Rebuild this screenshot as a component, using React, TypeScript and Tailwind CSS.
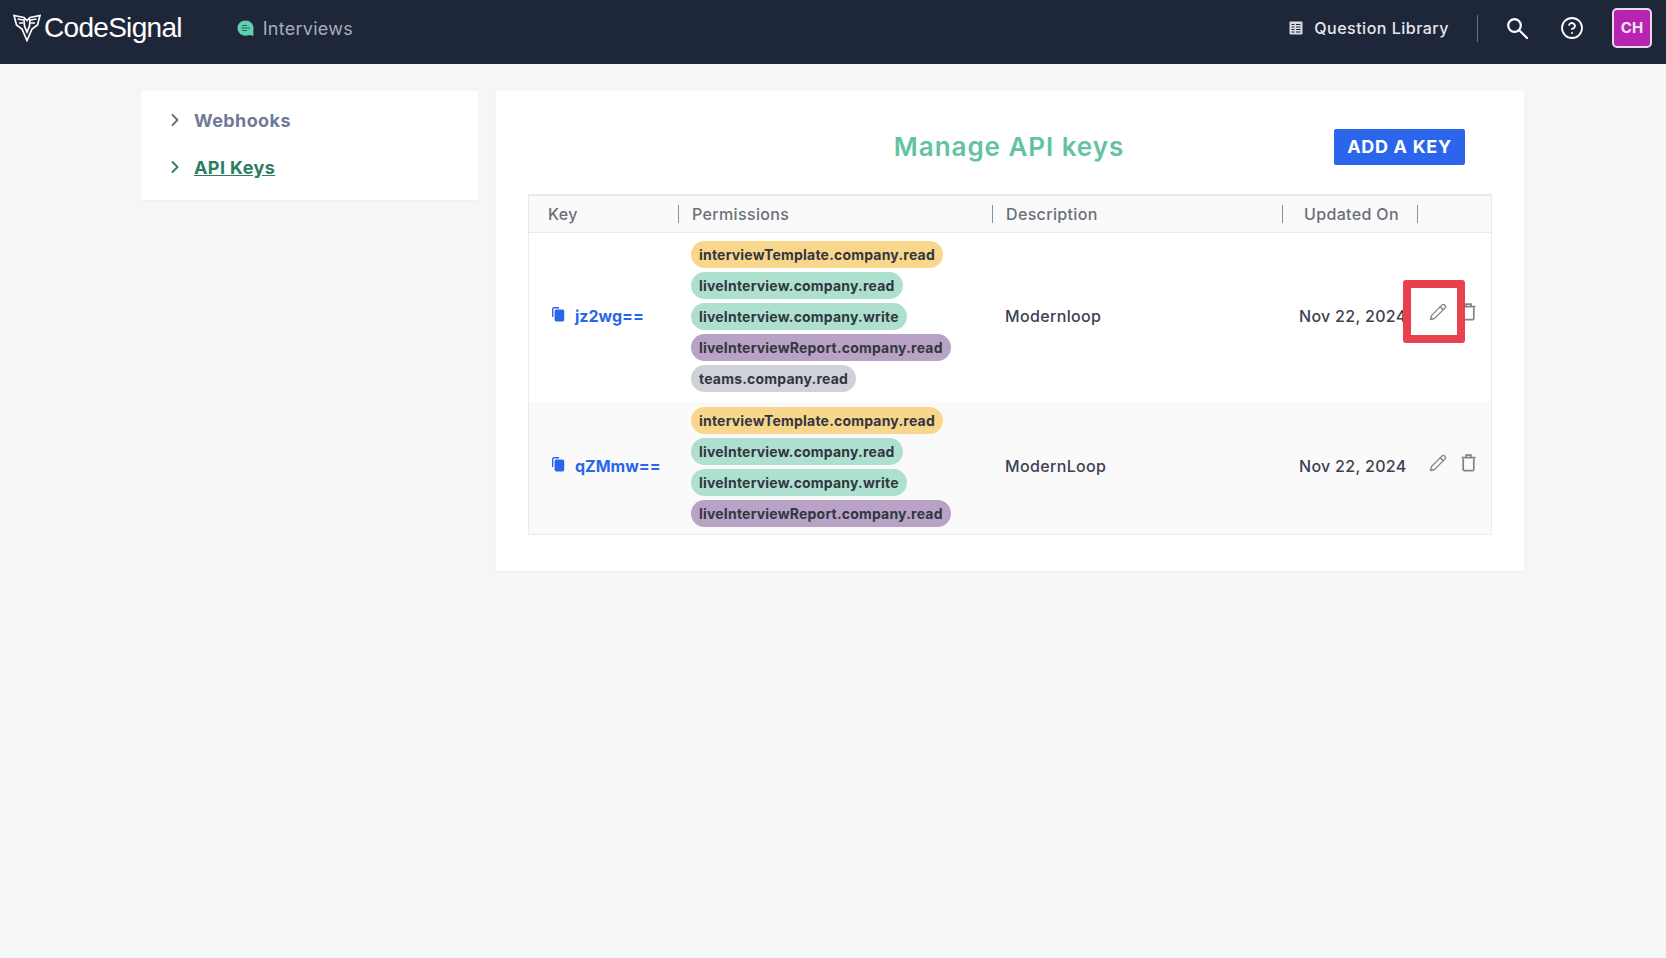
import { ChevronRight, CircleHelp, Pencil } from "lucide-react";

const pillColors: Record<string, string> = {
  interviewTemplate: "bg-[#f8d68c]",
  liveInterview: "bg-[#aee0d0]",
  liveInterviewReport: "bg-[#b8a2c6]",
  teams: "bg-[#cfd2d9]",
};

const rows = [
  {
    key: "jz2wg==",
    description: "Modernloop",
    date: "Nov 22, 2024",
    rowClass: "bg-white pt-[8px] pb-[10px]",
    permissions: [
      "interviewTemplate.company.read",
      "liveInterview.company.read",
      "liveInterview.company.write",
      "liveInterviewReport.company.read",
      "teams.company.read",
    ],
  },
  {
    key: "qZMmw==",
    description: "ModernLoop",
    date: "Nov 22, 2024",
    rowClass: "bg-[#fafafb] pt-[5px] pb-[7px]",
    permissions: [
      "interviewTemplate.company.read",
      "liveInterview.company.read",
      "liveInterview.company.write",
      "liveInterviewReport.company.read",
    ],
  },
];

function Logo() {
  return (
    <svg width="28" height="28" viewBox="0 0 28 28" fill="none" stroke="#ffffff" strokeWidth="1.7" strokeLinejoin="miter">
      <path d="M1 1.5 L11 3.5 L14 6.5 L17 3.5 L27 1.5 L24.5 11 L19 15 L14 26.5 L9 15 L3.5 11 Z" />
      <path d="M4.5 5 L10.5 6 M6 9 L10.5 9 M23.5 5 L17.5 6 M22 9 L17.5 9" />
      <path d="M11 5 L11.5 12 L14 18 L16.5 12 L17 5" />
    </svg>
  );
}

function CopyIcon() {
  return (
    <svg width="14" height="16" viewBox="0 0 14 16" fill="#2b65ec">
      <path d="M1 3.5 C1 2 1.8 1 3 1 H8 V2.4 H3.4 C2.8 2.4 2.4 2.8 2.4 3.4 V11 H1 Z" />
      <rect x="3.6" y="3.4" width="9.6" height="12" rx="1.6" />
    </svg>
  );
}

function LibraryIcon() {
  return (
    <svg width="14" height="14" viewBox="0 0 14 14" fill="none">
      <rect x="0.5" y="0.5" width="13" height="13" rx="1" fill="#d9dbe0" />
      <path d="M2.5 3.5 H5.5 M7 3.5 H11.5 M2.5 6 H5.5 M7 6 H11.5 M2.5 8.5 H5.5 M7 8.5 H11.5 M2.5 11 H5.5 M7 11 H11.5" stroke="#1e2639" strokeWidth="1.1" />
    </svg>
  );
}

function SearchIcon() {
  return (
    <svg width="23" height="23" viewBox="0 0 23 23" fill="none" stroke="#ffffff" strokeWidth="2.2">
      <circle cx="8.5" cy="8.5" r="6.3" />
      <path d="M13 13 L21 21" strokeLinecap="round" />
    </svg>
  );
}

function TrashIcon() {
  return (
    <svg width="15" height="18" viewBox="0 0 15 18" fill="none" stroke="#7f838e" strokeWidth="1.7">
      <path d="M2.2 4.5 V15.5 C2.2 16.2 2.7 16.6 3.3 16.6 H11.7 C12.3 16.6 12.8 16.2 12.8 15.5 V4.5" />
      <path d="M0.5 3.6 H14.5" />
      <path d="M5 3.2 V1.2 H10 V3.2" />
    </svg>
  );
}

function HeaderCell({ label, className }: { label: string; className: string }) {
  return (
    <div className={`flex items-center justify-between ${className}`}>
      <span>{label}</span>
      <span className="h-[18px] w-px bg-[#8d919b]" />
    </div>
  );
}

export default function App() {
  return (
    <div className="min-h-screen bg-[#f5f6f8] font-['Inter',sans-serif] text-[#3d4150]">
      {/* top bar */}
      <header className="flex h-[64px] items-center justify-between bg-[#1e2639] pb-[8px] pl-[13px] pr-[14px]">
        <div className="flex items-center">
          <div className="flex items-center">
            <Logo />
            <span className="ml-[3px] font-['Liberation_Sans',sans-serif] text-[28px] tracking-[-0.7px] text-white">CodeSignal</span>
          </div>
          <div className="ml-[55px] flex items-center gap-[9px]">
            <svg width="17" height="17" viewBox="0 0 17 17">
              <path d="M8.5 0.5 C13 0.5 16.5 3.8 16.5 8 C16.5 10 16.2 12 16.4 16 L12.5 15 C11.2 15.5 10 15.7 8.5 15.7 C4 15.7 0.5 12.4 0.5 8 C0.5 3.8 4 0.5 8.5 0.5 Z" fill="#5fd0b0" />
              <path d="M5 5.5 H10 M4 8 H13 M5 10.5 H10" stroke="#1e5a50" strokeWidth="0.9" />
            </svg>
            <span className="text-[18px] tracking-[0.25px] text-[#a9adb9]">Interviews</span>
          </div>
        </div>
        <div className="flex items-center">
          <div className="flex items-center gap-[11px] text-[16px] font-medium tracking-[0.5px] text-[#e6e7ea]">
            <LibraryIcon />
            <span>Question Library</span>
          </div>
          <span className="ml-[28px] h-[27px] w-px bg-[#6b7080]" />
          <span className="ml-[28px]"><SearchIcon /></span>
          <CircleHelp className="ml-[31px] text-white" size={24} strokeWidth={1.8} />
          <div className="ml-[28px] flex h-[40px] w-[40px] items-center justify-center rounded-[5px] border-2 border-[#e5dbe6] bg-[#b624b2] text-[15px] font-bold text-[#f5e6f5]">
            CH
          </div>
        </div>
      </header>

      <main className="flex items-start gap-[18px] pl-[141px] pt-[27px]">
        {/* side menu */}
        <nav className="flex h-[109px] w-[337px] flex-col gap-[25px] bg-white pl-[24px] pt-[18px] text-[18px] font-bold tracking-[0.4px] shadow-[0_1px_2px_rgba(0,0,0,0.04)]">
          <div className="flex h-[22px] items-center gap-[9px] text-[#6f7a96]">
            <ChevronRight size={20} strokeWidth={2.2} className="text-[#666c7c]" />
            <span>Webhooks</span>
          </div>
          <div className="flex h-[22px] items-center gap-[9px] text-[#2f7d60]">
            <ChevronRight size={20} strokeWidth={2.2} />
            <span className="underline">API Keys</span>
          </div>
        </nav>

        {/* keys card */}
        <section className="relative h-[480px] w-[1028px] bg-white px-[32px] pt-[36px] shadow-[0_1px_2px_rgba(0,0,0,0.04)]">
          <div className="mb-[28px] grid grid-cols-[1fr_auto_1fr] items-center pr-[27px]">
            <span />
            <h1 className="pl-[25px] text-[26px] font-semibold tracking-[0.95px] text-[#64c2a3]">Manage API keys</h1>
            <button className="h-[36px] w-[131px] justify-self-end rounded-[2px] bg-[#2b65ec] text-[18px] font-bold tracking-[0.7px] text-white">
              ADD A KEY
            </button>
          </div>

          <div className="border border-t-2 border-[#e9eaed]">
            <div className="flex h-[37px] items-center border-b border-[#e9eaed] bg-[#fafafa] text-[16px] font-medium tracking-[0.35px] text-[#6b6f7a]">
              <HeaderCell label="Key" className="w-[150px] pl-[19px]" />
              <HeaderCell label="Permissions" className="w-[314px] pl-[13px]" />
              <HeaderCell label="Description" className="w-[290px] pl-[13px]" />
              <HeaderCell label="Updated On" className="w-[135px] pl-[21px]" />
            </div>

            {rows.map((row) => (
              <div key={row.key} className={`flex items-center ${row.rowClass}`}>
                <div className="-mt-[2px] flex w-[150px] items-center gap-[10px] pl-[22px] text-[16px] font-bold text-[#2b65ec]">
                  <span className="-mt-[4px]"><CopyIcon /></span>
                  <span>{row.key}</span>
                </div>
                <div className="flex w-[313px] flex-col items-start gap-[4px] pl-[12px]">
                  {row.permissions.map((name) => (
                    <span
                      key={name}
                      className={`flex h-[27px] items-center rounded-full px-[8px] text-[14px] font-bold tracking-[0.2px] text-[#33363f] ${pillColors[name.split(".")[0]]}`}
                    >
                      {name}
                    </span>
                  ))}
                </div>
                <div className="-mt-[2px] w-[291px] pl-[13px] text-[16px] font-medium tracking-[0.35px]">{row.description}</div>
                <div className="-mt-[2px] w-[130px] pl-[16px] text-[16px] font-medium tracking-[0.3px]">{row.date}</div>
                <div className="-mt-[9px] flex items-center gap-[14px] pl-[16px] text-[#7f838e]">
                  <Pencil size={18} strokeWidth={1.8} />
                  <TrashIcon />
                </div>
              </div>
            ))}
          </div>

          {/* callout around the edit icon */}
          <div className="absolute left-[907px] top-[189px] h-[63px] w-[62px] rounded-[3px] border-[8px] border-[#e8404c]" />
        </section>
      </main>
    </div>
  );
}
